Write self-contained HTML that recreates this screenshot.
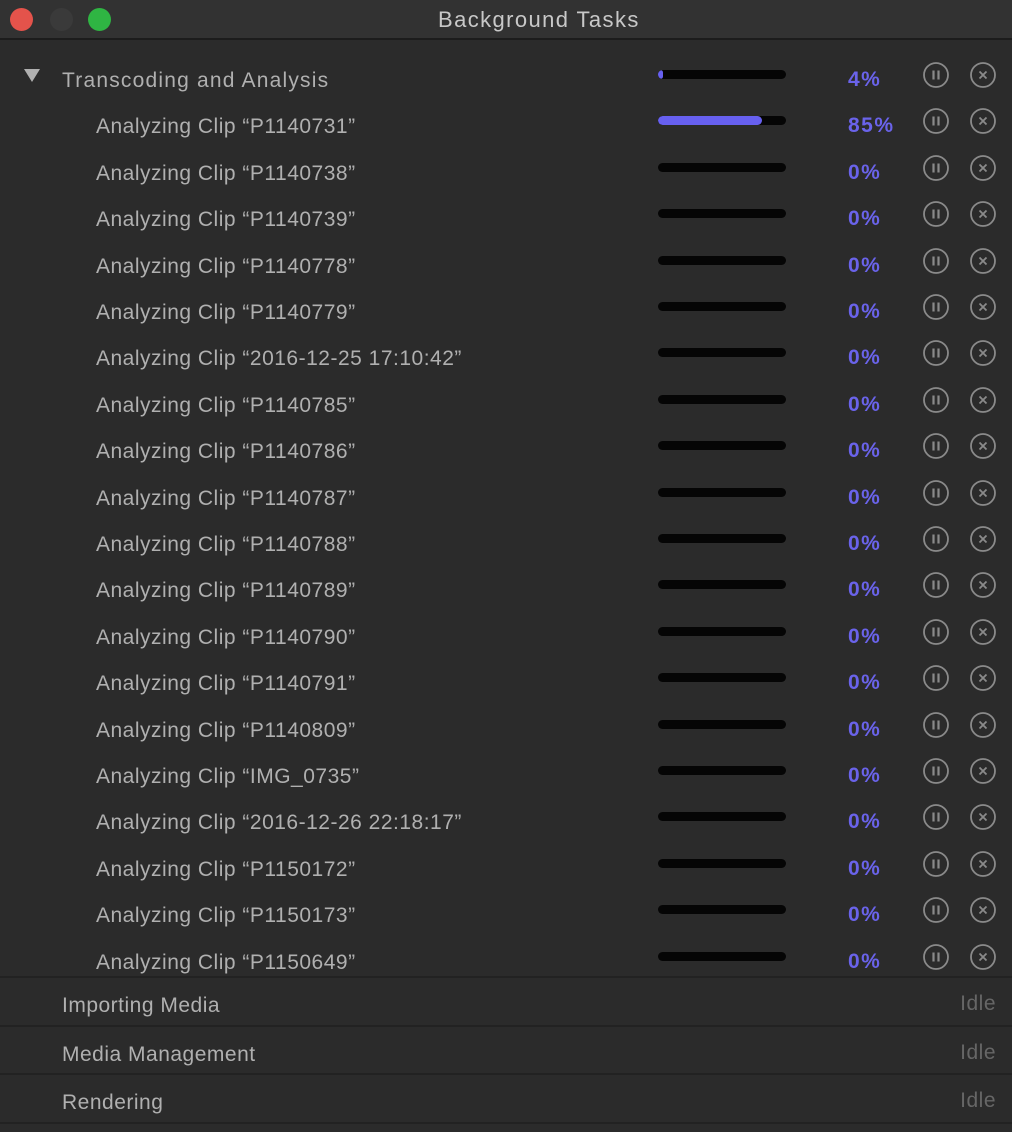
<!DOCTYPE html>
<html><head><meta charset="utf-8"><style>
body{margin:0;width:1012px;height:1132px;background:#2b2b2b;font-family:"Liberation Sans",sans-serif;overflow:hidden;position:relative}
.tb{position:absolute;left:0;top:0;width:1012px;height:38px;background:#323232;border-bottom:2px solid #1c1c1c}
.tb .t{position:absolute;left:438px;top:7px;color:#c8c8c8;font-size:22px;letter-spacing:1.4px;white-space:nowrap}
.d{position:absolute;top:8px;width:23px;height:23px;border-radius:50%}
.r{position:absolute;left:0;width:1012px;height:40px}
.r .n{position:absolute;top:11px;color:#b0b0b0;font-size:21px;letter-spacing:0.5px;white-space:nowrap}
.bar{position:absolute;left:658px;top:12px;width:128px;height:9px;border-radius:5px;background:#050505;overflow:hidden}
.bar i{position:absolute;left:0;top:0;height:9px;background:#6760f0;border-radius:5px}
.p{position:absolute;left:848px;top:10px;color:#6a63ea;font-size:21px;font-weight:bold;letter-spacing:1.5px}
.ic{position:absolute;top:3px}
.sep{position:absolute;left:0;width:1012px;height:2px;background:#222}
.idle{position:absolute;right:16px;top:9px;color:#666;font-size:21px;letter-spacing:0.5px}
</style></head><body>
<div class="tb"><div class="d" style="left:10px;background:#e4534b"></div><div class="d" style="left:50px;background:#3a3a3a"></div><div class="d" style="left:88px;background:#2fb543"></div><div class="t">Background Tasks</div></div>
<div id="rows"></div>
<script>
var names=["P1140731","P1140738","P1140739","P1140778","P1140779","2016-12-25 17:10:42","P1140785","P1140786","P1140787","P1140788","P1140789","P1140790","P1140791","P1140809","IMG_0735","2016-12-26 22:18:17","P1150172","P1150173","P1150649"];
var icons='<svg class="ic" style="left:922px" width="28" height="28" viewBox="0 0 28 28"><circle cx="14" cy="14" r="12" fill="none" stroke="#8a8a8a" stroke-width="1.8"/><path d="M11.5 9.5v9M16.5 9.5v9" stroke="#8a8a8a" stroke-width="2.2"/></svg><svg class="ic" style="left:969px" width="28" height="28" viewBox="0 0 28 28"><circle cx="14" cy="14" r="12" fill="none" stroke="#8a8a8a" stroke-width="1.8"/><path d="M10.5 10.5l7 7M17.5 10.5l-7 7" stroke="#8a8a8a" stroke-width="1.8"/></svg>';
var h='';
h+='<div class="r" style="top:58px"><svg style="position:absolute;left:24px;top:11px" width="16" height="14"><path d="M0 0h16L8 13z" fill="#b0b0b0"/></svg><div class="n" style="left:62px;letter-spacing:1.2px">Transcoding and Analysis</div><div class="bar"><i style="width:5px"></i></div><div class="p">4%</div>'+icons+'</div>';
for(var i=0;i<names.length;i++){var y=58+46.4*(i+1);var w=i==0?'<i style="width:104px"></i>':'';
h+='<div class="r" style="top:'+y+'px"><div class="n" style="left:96px">Analyzing Clip “'+names[i]+'”</div><div class="bar">'+w+'</div><div class="p">'+(i==0?'85%':'0%')+'</div>'+icons+'</div>';}
var b=["Importing Media","Media Management","Rendering"];
for(var j=0;j<3;j++){var y=976+48.5*j;h+='<div class="sep" style="top:'+y+'px"></div><div class="r" style="top:'+(y+7)+'px"><div class="n" style="left:62px">'+b[j]+'</div><div class="idle">Idle</div></div>';}
h+='<div class="sep" style="top:1122px"></div>';
document.getElementById('rows').innerHTML=h;
</script>
</body></html>
